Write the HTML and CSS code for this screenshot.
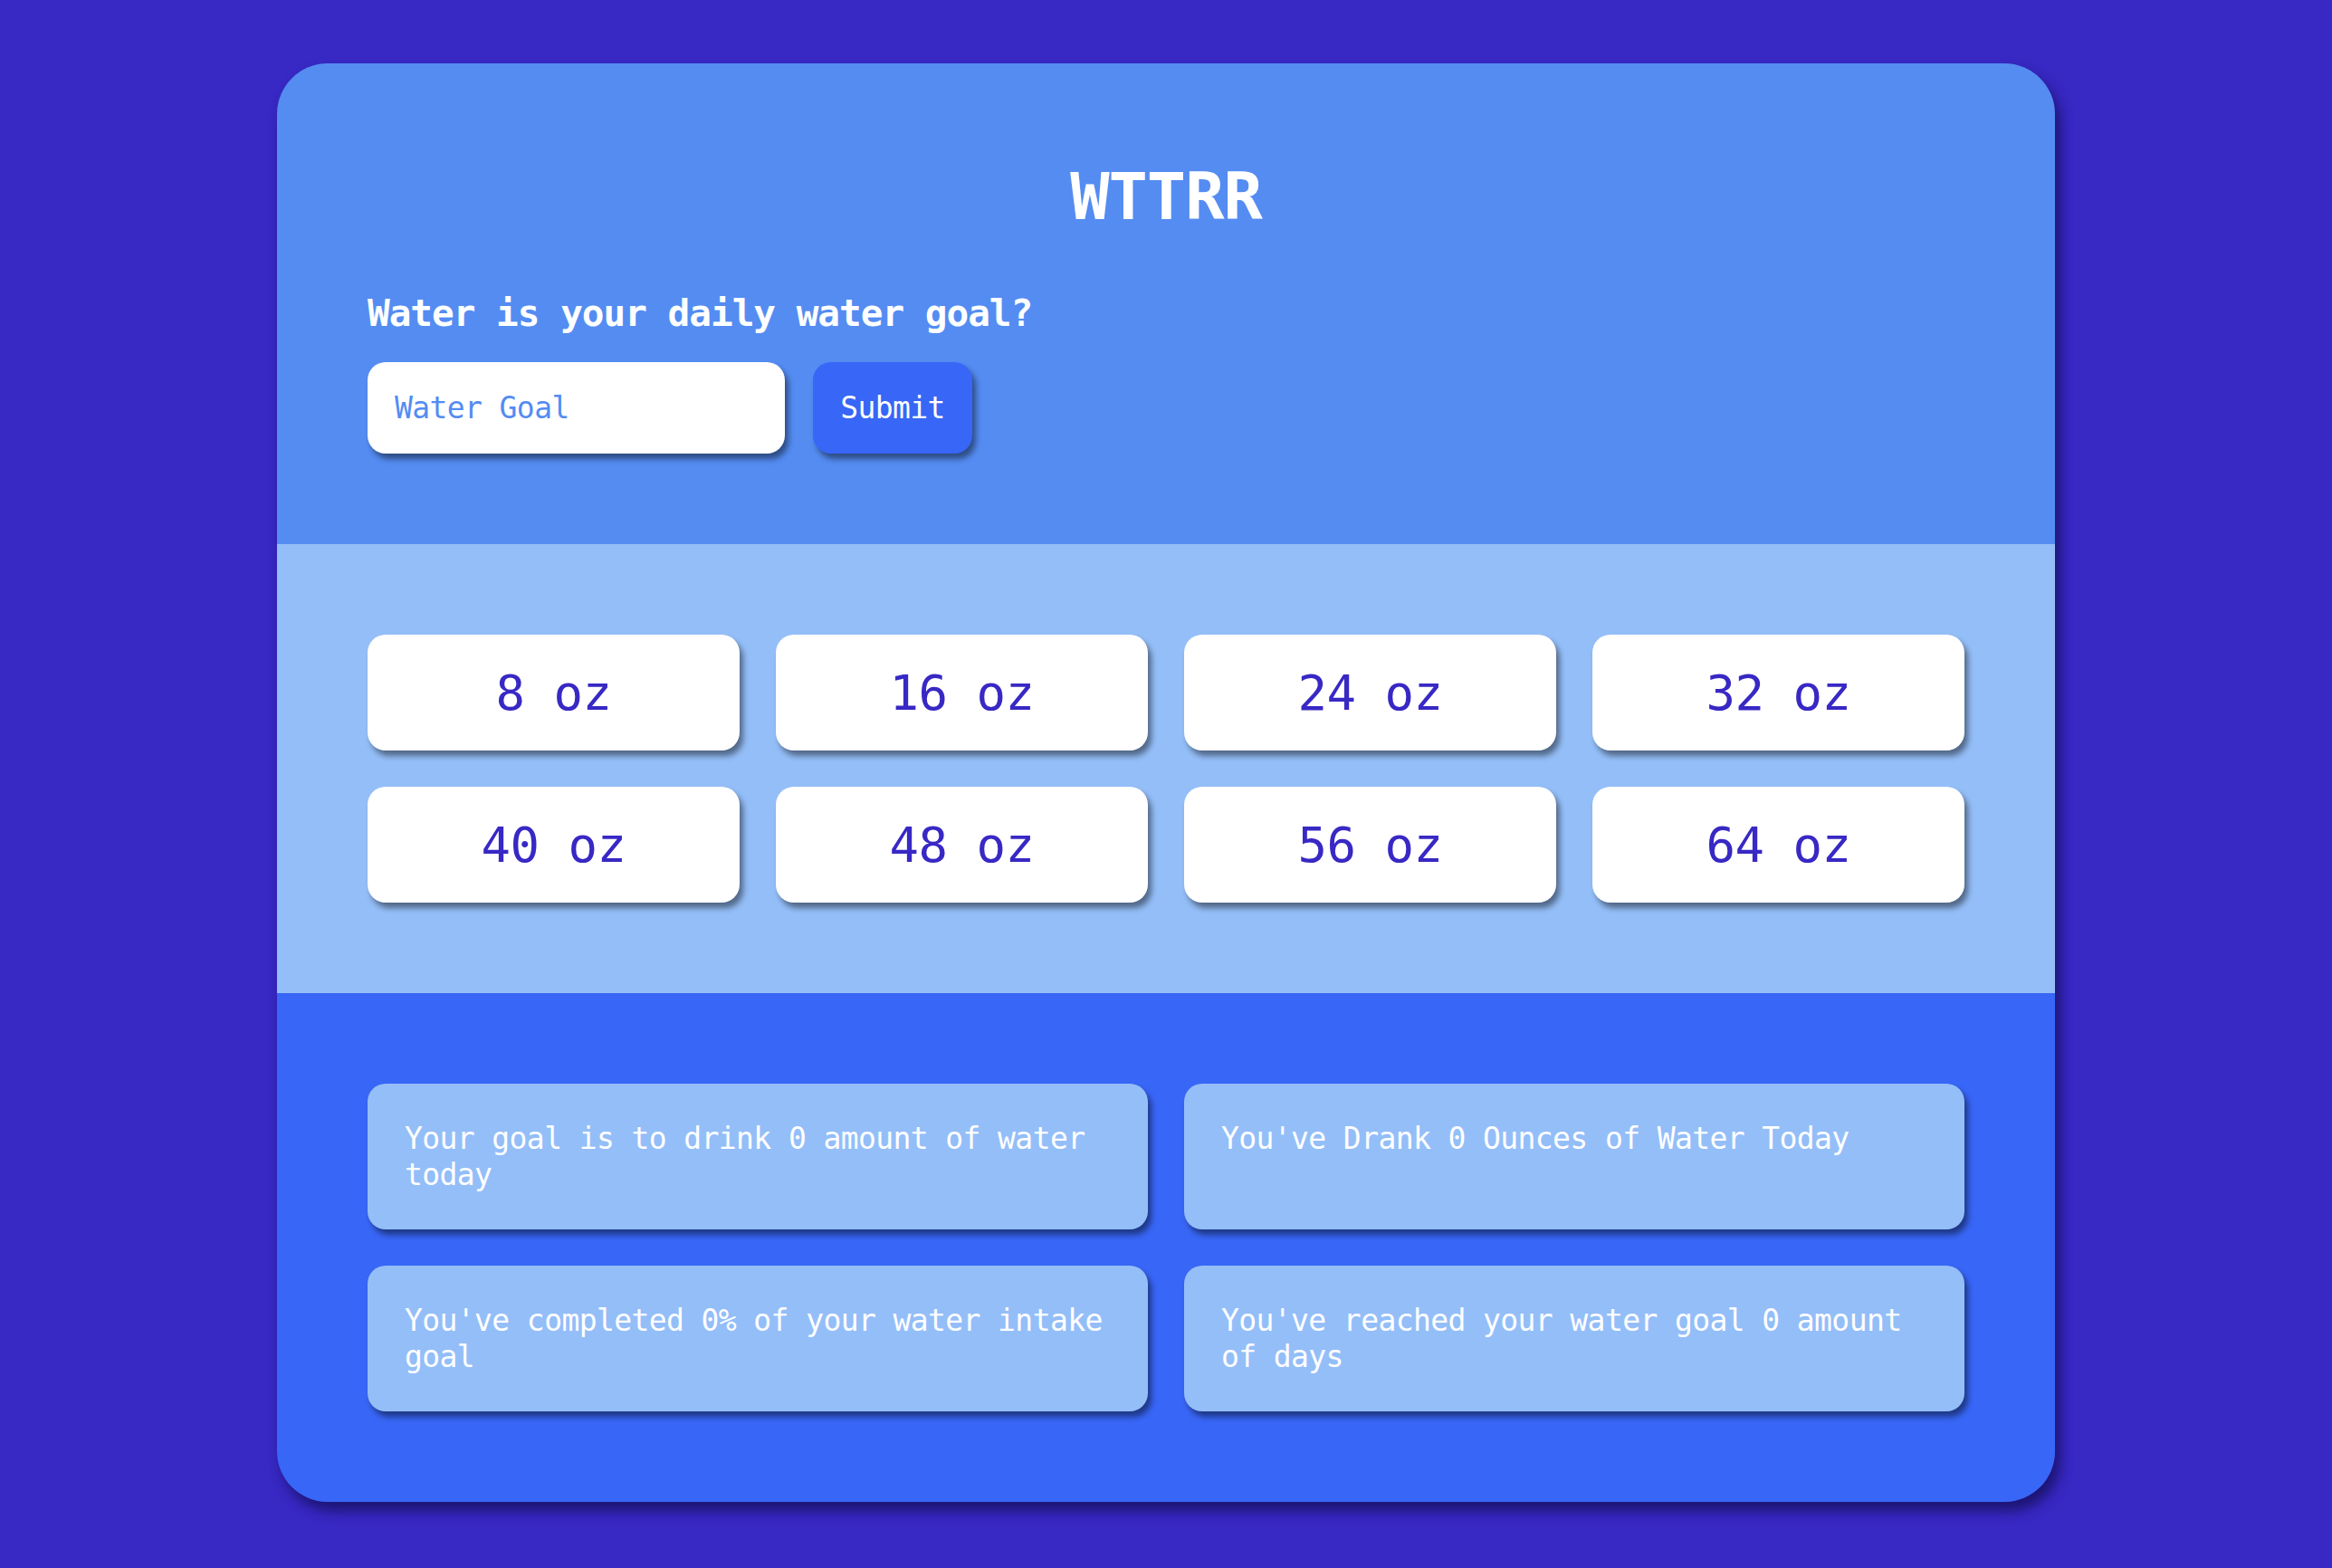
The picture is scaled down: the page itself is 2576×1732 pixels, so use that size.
FILE: index.html
```html
<!DOCTYPE html>
<html lang="en">
<head>
<meta charset="utf-8">
<title>WTTRR</title>
<link rel="stylesheet" href="styles.css">
</head>
<body>
  <main class="app">
    <section class="goal-section">
      <h1 class="title">WTTRR</h1>
      <h2 class="question">Water is your daily water goal?</h2>
      <form class="goal-form">
        <input class="goal-input" type="text" placeholder="Water Goal">
        <button class="submit-btn" type="button">Submit</button>
      </form>
    </section>
    <section class="amount-section">
      <button class="amount-btn" type="button">8 oz</button>
      <button class="amount-btn" type="button">16 oz</button>
      <button class="amount-btn" type="button">24 oz</button>
      <button class="amount-btn" type="button">32 oz</button>
      <button class="amount-btn" type="button">40 oz</button>
      <button class="amount-btn" type="button">48 oz</button>
      <button class="amount-btn" type="button">56 oz</button>
      <button class="amount-btn" type="button">64 oz</button>
    </section>
    <section class="stats-section">
      <div class="stat-card">Your goal is to drink 0 amount of water today</div>
      <div class="stat-card">You've Drank 0 Ounces of Water Today</div>
      <div class="stat-card">You've completed 0% of your water intake goal</div>
      <div class="stat-card">You've reached your water goal 0 amount of days</div>
    </section>
  </main>
</body>
</html>
```
FILE: styles.css
```css
* {
  box-sizing: border-box;
}

html, body {
  margin: 0;
  padding: 0;
}

body {
  background: #3828c4;
  min-height: 100vh;
  padding-top: 70px;
  font-family: "DejaVu Sans Mono", "Liberation Mono", monospace;
}

.app {
  width: 1964px;
  margin: 0 auto;
  border-radius: 56px;
  overflow: hidden;
  box-shadow: 6px 10px 14px rgba(10, 8, 60, 0.6);
}

.goal-section {
  background: #548cf2;
  padding: 111px 100px 100px;
}

.title {
  margin: 0;
  font-size: 72px;
  line-height: 72px;
  letter-spacing: -1px;
  font-weight: bold;
  color: #ffffff;
  text-align: center;
}

.question {
  margin: 69px 0 30px;
  font-size: 41px;
  line-height: 48px;
  letter-spacing: -1px;
  font-weight: bold;
  color: #ffffff;
}

.goal-form {
  display: flex;
  gap: 31px;
  margin: 0;
}

.goal-input {
  width: 461px;
  height: 101px;
  border: none;
  border-radius: 20px;
  background: #ffffff;
  padding: 0 30px;
  font-family: inherit;
  font-size: 33px;
  letter-spacing: -0.6px;
  color: #3828c4;
  outline: none;
  box-shadow: 4px 6px 6px rgba(0, 0, 0, 0.45);
}

.goal-input::placeholder {
  color: #548cf2;
  opacity: 1;
}

.submit-btn {
  width: 176px;
  height: 101px;
  border: none;
  border-radius: 20px;
  background: #3866f6;
  color: #ffffff;
  font-family: inherit;
  font-size: 33px;
  letter-spacing: -0.6px;
  padding: 0;
  box-shadow: 4px 6px 6px rgba(0, 0, 0, 0.45);
}

.amount-section {
  background: #94bef8;
  padding: 100px;
  display: grid;
  grid-template-columns: repeat(4, 1fr);
  gap: 40px;
}

.amount-btn {
  height: 128px;
  border: none;
  border-radius: 20px;
  background: #ffffff;
  color: #3828c4;
  font-family: inherit;
  font-size: 54px;
  letter-spacing: -0.5px;
  padding: 0;
  box-shadow: 4px 6px 6px rgba(0, 0, 0, 0.45);
}

.stats-section {
  background: #3866f6;
  padding: 100px;
  display: grid;
  grid-template-columns: repeat(2, 1fr);
  gap: 40px;
}

.stat-card {
  background: #94bef8;
  border-radius: 20px;
  padding: 41px 40px 40px 41px;
  color: #ffffff;
  font-size: 33px;
  line-height: 40px;
  letter-spacing: -0.6px;
  min-height: 161px;
  box-shadow: 4px 6px 6px rgba(0, 0, 0, 0.45);
}
```
